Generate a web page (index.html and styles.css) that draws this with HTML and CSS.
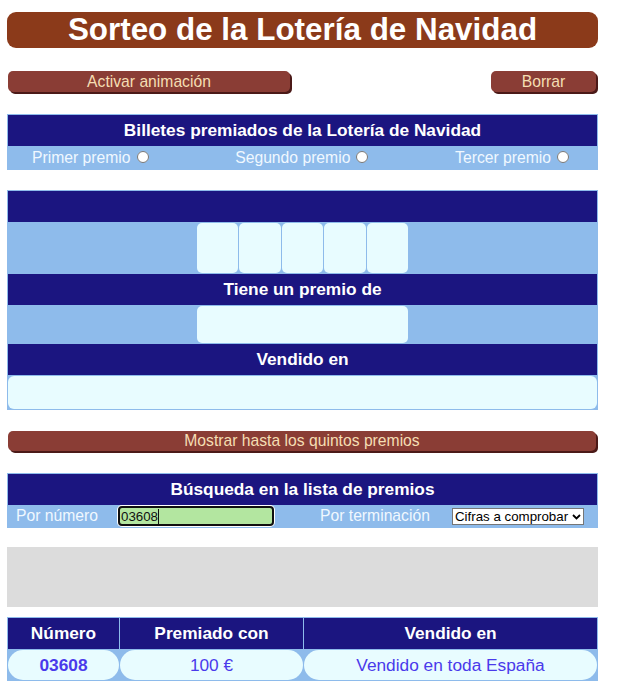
FILE: index.html
```html
<!DOCTYPE html>
<html lang="es">
<head>
<meta charset="utf-8">
<title>Sorteo de la Lotería de Navidad</title>
<link rel="stylesheet" href="styles.css">
</head>
<body>
<div class="page">
  <h1 class="title">Sorteo de la Lotería de Navidad</h1>

  <div class="btn-row">
    <button class="btn btn-anim">Activar animación</button>
    <button class="btn btn-clear">Borrar</button>
  </div>

  <div class="panel panel-prizes">
    <div class="panel-head">Billetes premiados de la Lotería de Navidad</div>
    <div class="radio-row">
      <label class="radio-label"><span>Primer premio</span><input type="radio" name="premio" class="radio"></label>
      <label class="radio-label"><span>Segundo premio</span><input type="radio" name="premio" class="radio"></label>
      <label class="radio-label"><span>Tercer premio</span><input type="radio" name="premio" class="radio"></label>
    </div>
  </div>

  <div class="panel panel-ticket">
    <div class="panel-head"></div>
    <div class="digits-row">
      <div class="digits">
        <div class="digit"></div>
        <div class="digit"></div>
        <div class="digit"></div>
        <div class="digit"></div>
        <div class="digit"></div>
      </div>
    </div>
    <div class="panel-head">Tiene un premio de</div>
    <div class="prize-row">
      <div class="prize-box"></div>
    </div>
    <div class="panel-head">Vendido en</div>
    <div class="sold-row">
      <div class="sold-box"></div>
    </div>
  </div>

  <button class="btn btn-wide">Mostrar hasta los quintos premios</button>

  <div class="panel panel-search">
    <div class="panel-head">Búsqueda en la lista de premios</div>
    <div class="search-row">
      <span class="search-label">Por número</span>
      <span class="num-input"><span class="num-value">03608</span></span>
      <span class="search-label search-label-end">Por terminación</span>
      <span class="select-wrap">
        <select class="digits-select">
          <option>Cifras a comprobar</option>
        </select>
        <svg class="chevron" width="9" height="6" viewBox="0 0 9 6"><path d="M1 1 L4.5 4.5 L8 1" fill="none" stroke="#000" stroke-width="1.8"/></svg>
      </span>
    </div>
  </div>

  <div class="gray-box"></div>

  <div class="results">
    <div class="res-head">Número</div>
    <div class="res-head">Premiado con</div>
    <div class="res-head">Vendido en</div>
    <div class="res-cell res-num">03608</div>
    <div class="res-cell">100 €</div>
    <div class="res-cell">Vendido en toda España</div>
  </div>
</div>
</body>
</html>
```

FILE: styles.css
```css
body {
  margin: 0;
  background: #ffffff;
  font-family: "Liberation Sans", Arial, sans-serif;
}

.page {
  width: 591px;
  margin-left: 7px;
  padding-top: 12px;
}

.title {
  margin: 0;
  height: 36px;
  line-height: 36px;
  background: #8b3a1a;
  border-radius: 9px;
  color: #ffffff;
  font-size: 31.4px;
  font-weight: bold;
  text-align: center;
}

.btn-row {
  margin-top: 23px;
  display: flex;
  justify-content: space-between;
  padding: 0 2px 0 1px;
}

.btn {
  height: 21px;
  padding: 0;
  border: none;
  border-radius: 5px;
  background: #8a3d35;
  box-shadow: 2px 2px 0 #4b1a18;
  color: #f5deb3;
  font-family: "Liberation Sans", Arial, sans-serif;
  font-size: 15.7px;
  line-height: 21px;
  text-align: center;
}

.btn-anim {
  width: 282px;
}

.btn-clear {
  width: 105px;
}

.btn-wide {
  display: block;
  width: 588px;
  height: 20px;
  line-height: 20px;
  margin: 21px 0 0 1px;
}

.panel {
  border: 1px solid #8ebbeb;
  margin-top: 22px;
}

.panel-ticket {
  margin-top: 20px;
}

.panel-head {
  height: 31px;
  background: #1b1580;
  color: #ffffff;
  font-size: 17.3px;
  font-weight: bold;
  display: flex;
  align-items: center;
  justify-content: center;
}

.radio-row {
  height: 23px;
  background: #8ebbeb;
  display: flex;
  align-items: center;
  justify-content: space-between;
  padding: 0 28px 0 24px;
  color: #f0f8ff;
  font-size: 15.7px;
}

.radio-label {
  display: flex;
  align-items: center;
  gap: 6px;
}

.radio {
  width: 12px;
  height: 12px;
  margin: 0 0 2px 0;
}

.digits-row {
  height: 52px;
  background: #8ebbeb;
  display: flex;
  justify-content: center;
  align-items: center;
}

.digits {
  width: 211px;
  height: 50px;
  display: grid;
  grid-template-columns: repeat(5, 1fr);
  gap: 1px;
}

.digit {
  background: #e8fcff;
  border-radius: 5px;
}

.prize-row {
  height: 39px;
  background: #8ebbeb;
  display: flex;
  justify-content: center;
  align-items: center;
}

.prize-box {
  width: 211px;
  height: 37px;
  background: #e8fcff;
  border-radius: 5px;
}

.sold-row {
  background: #8ebbeb;
  padding-top: 1px;
}

.sold-box {
  height: 33px;
  background: #e8fcff;
  border-radius: 6px;
}

.search-row {
  height: 22px;
  background: #8ebbeb;
  display: grid;
  grid-template-columns: 110px 156px 178px 132px 1fr;
  align-items: center;
  color: #f0f8ff;
  font-size: 15.7px;
}

.search-label {
  padding-left: 8px;
}

.search-label-end {
  padding-left: 46px;
}

.num-input {
  box-sizing: border-box;
  display: flex;
  align-items: center;
  width: 156px;
  height: 20px;
  padding: 0 1px;
  border: 2px solid #101010;
  border-radius: 4px;
  box-shadow: 0 0 0 1px #ffffff;
  background: #b3e6a0;
  color: #111111;
  font-size: 13.3px;
}

.num-value {
  border-right: 1px solid #111111;
  line-height: 15px;
}

.select-wrap {
  position: relative;
  display: block;
  width: 132px;
  height: 17px;
}

.digits-select {
  box-sizing: border-box;
  display: block;
  width: 132px;
  height: 17px;
  margin: 0;
  padding: 0 0 0 2px;
  border: 1px solid #767676;
  border-radius: 0;
  background: #ffffff;
  color: #000000;
  font-family: "Liberation Sans", Arial, sans-serif;
  font-size: 13.3px;
  appearance: none;
  -webkit-appearance: none;
}

.chevron {
  position: absolute;
  right: 3px;
  top: 6px;
}

.gray-box {
  margin-top: 19px;
  height: 60px;
  background: #dcdcdc;
}

.results {
  margin-top: 10px;
  display: grid;
  grid-template-columns: 111px 183px 293px;
  grid-template-rows: 31px 30px;
  gap: 1px;
  padding: 1px;
  background: #8ebbeb;
}

.res-head {
  background: #1b1580;
  color: #ffffff;
  font-size: 17.3px;
  font-weight: bold;
  display: flex;
  align-items: center;
  justify-content: center;
}

.res-cell {
  background: #e8fcff;
  border-radius: 15px;
  color: #4a3aeb;
  font-size: 17.3px;
  display: flex;
  align-items: center;
  justify-content: center;
}

.res-num {
  font-weight: bold;
}
```
